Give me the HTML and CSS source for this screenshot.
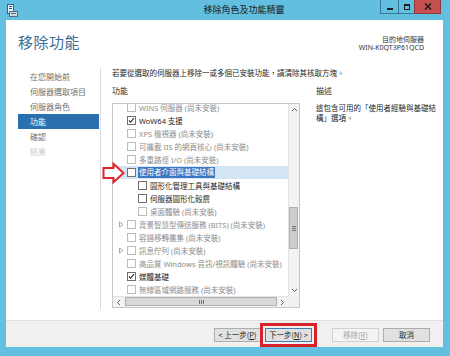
FILE: index.html
```html
<!DOCTYPE html>
<html lang="zh-Hant">
<head>
    <meta charset="UTF-8">
    <title>移除角色及功能精靈</title>
    <link rel="stylesheet" href="styles.css">
</head>
<body>
    <div class="window">
        <div class="titlebar">
            <svg class="app-icon" width="12" height="13" viewBox="0 0 12 13">
                <rect x="1.5" y="0.5" width="6" height="9" fill="#e8f4fb" stroke="#2d5f8a"/>
                <rect x="3" y="2" width="3" height="1" fill="#2d5f8a"/>
                <rect x="3" y="4" width="3" height="1" fill="#2d5f8a"/>
                <rect x="3.5" y="7.5" width="8" height="5" fill="#cfd8de" stroke="#55707f"/>
                <rect x="5" y="9" width="5" height="1" fill="#55707f"/>
            </svg>
            <div class="title">移除角色及功能精靈</div>
            <div class="caption-buttons">
                <span class="cb cb-min"><i></i></span>
                <span class="cb cb-max"><i></i></span>
                <span class="cb cb-close">
                    <svg width="8" height="7" viewBox="0 0 8 7"><path d="M1 0.5 L7 6.5 M7 0.5 L1 6.5" stroke="#1d1d1d" stroke-width="1.6"/></svg>
                </span>
            </div>
        </div>

        <div class="client">
            <div class="header">
                <h1>移除功能</h1>
                <div class="server">
                    <div>目的地伺服器</div>
                    <div>WIN-K0QT3P61QCD</div>
                </div>
            </div>

            <div class="main">
                <ul class="nav">
                    <li>在您開始前</li>
                    <li>伺服器選取項目</li>
                    <li>伺服器角色</li>
                    <li class="active">功能</li>
                    <li>確認</li>
                    <li class="disabled">結果</li>
                </ul>

                <div class="content">
                    <p class="intro">若要從選取的伺服器上移除一或多個已安裝功能，請清除其核取方塊。</p>
                    <div class="columns">
                        <div class="features">
                            <div class="label">功能</div>
                            <div class="listbox">
                                <div class="rows">
                                    <div class="row off first"><span class="exp"></span><span class="box"></span><span class="txt">WINS 伺服器 (尚未安裝)</span></div>
                                    <div class="row"><span class="exp"></span><span class="box checked"><svg viewBox="0 0 9 9"><path d="M1.3 4.3 L3.4 6.8 L7.6 1.4" fill="none" stroke="#1d1d1d" stroke-width="1.3"/></svg></span><span class="txt">WoW64 支援</span></div>
                                    <div class="row off"><span class="exp"></span><span class="box"></span><span class="txt">XPS 檢視器 (尚未安裝)</span></div>
                                    <div class="row off"><span class="exp"></span><span class="box"></span><span class="txt">可攜載 IIS 的網頁核心 (尚未安裝)</span></div>
                                    <div class="row off"><span class="exp"></span><span class="box"></span><span class="txt">多重路徑 I/O (尚未安裝)</span></div>
                                    <div class="row selected"><span class="exp"></span><span class="box"></span><span class="txt">使用者介面與基礎結構</span></div>
                                    <div class="row child"><span class="exp"></span><span class="box"></span><span class="txt">圖形化管理工具與基礎結構</span></div>
                                    <div class="row child"><span class="exp"></span><span class="box"></span><span class="txt">伺服器圖形化殼層</span></div>
                                    <div class="row child off"><span class="exp"></span><span class="box"></span><span class="txt">桌面體驗 (尚未安裝)</span></div>
                                    <div class="row off"><span class="exp"><svg viewBox="0 0 10 13"><path d="M3.5 4 L7 6.5 L3.5 9 Z" fill="none" stroke="#a6a6a6"/></svg></span><span class="box"></span><span class="txt">背景智慧型傳送服務 (BITS) (尚未安裝)</span></div>
                                    <div class="row off"><span class="exp"></span><span class="box"></span><span class="txt">容錯移轉叢集 (尚未安裝)</span></div>
                                    <div class="row off"><span class="exp"><svg viewBox="0 0 10 13"><path d="M3.5 4 L7 6.5 L3.5 9 Z" fill="none" stroke="#a6a6a6"/></svg></span><span class="box"></span><span class="txt">訊息佇列 (尚未安裝)</span></div>
                                    <div class="row off"><span class="exp"></span><span class="box"></span><span class="txt">高品質 Windows 音訊/視訊體驗 (尚未安裝)</span></div>
                                    <div class="row"><span class="exp"></span><span class="box checked"><svg viewBox="0 0 9 9"><path d="M1.3 4.3 L3.4 6.8 L7.6 1.4" fill="none" stroke="#1d1d1d" stroke-width="1.3"/></svg></span><span class="txt">媒體基礎</span></div>
                                    <div class="row off"><span class="exp"></span><span class="box"></span><span class="txt">無線區域網路服務 (尚未安裝)</span></div>
                                </div>
                                <div class="vscroll">
                                    <span class="sb-btn"><svg width="7" height="5" viewBox="0 0 7 5"><path d="M1 4 L3.5 1.5 L6 4" fill="none" stroke="#606060"/></svg></span>
                                    <div class="sb-track"><div class="sb-thumb v"><i></i><i></i><i></i></div></div>
                                    <span class="sb-btn"><svg width="7" height="5" viewBox="0 0 7 5"><path d="M1 1 L3.5 3.5 L6 1" fill="none" stroke="#606060"/></svg></span>
                                </div>
                                <div class="hscroll">
                                    <span class="sb-btn"><svg width="5" height="7" viewBox="0 0 5 7"><path d="M4 1 L1.5 3.5 L4 6" fill="none" stroke="#606060"/></svg></span>
                                    <div class="sb-track"><div class="sb-thumb h"><i></i><i></i><i></i></div></div>
                                    <span class="sb-btn"><svg width="5" height="7" viewBox="0 0 5 7"><path d="M1 1 L3.5 3.5 L1 6" fill="none" stroke="#606060"/></svg></span>
                                </div>
                                <div class="corner"></div>
                            </div>
                        </div>
                        <div class="desc">
                            <div class="label">描述</div>
                            <p>這包含可用的「使用者經驗與基礎結<br>構」選項。</p>
                        </div>
                    </div>
                </div>
            </div>

            <div class="footer">
                <button class="btn">&lt; 上一步(<u>P</u>)</button>
                <button class="btn default marked">下一步(<u>N</u>) &gt;</button>
                <button class="btn off gap">移除(<u>R</u>)</button>
                <button class="btn">取消</button>
            </div>
        </div>

        <!-- callout pointing at the selected feature -->
        <svg class="callout-arrow" width="24" height="22" viewBox="0 0 24 22">
            <path d="M1.5 6 H11.5 V1.8 L21.5 11 L11.5 20.2 V16 H1.5 Z" fill="#fff" stroke="#e2242b" stroke-width="2" stroke-linejoin="miter"/>
        </svg>
    </div>
</body>
</html>
```

FILE: styles.css
```css
body {
    margin: 0;
    font-family: "Noto Sans", "Noto Sans CJK TC", sans-serif;
    color: #262626;
}

.window {
    position: relative;
    width: 450px;
    height: 356px;
    box-sizing: border-box;
    padding: 0 7px 9px 6px;
    background-color: #63bfdf;
    display: flex;
    flex-direction: column;
}

/* title bar */
.titlebar {
    height: 20px;
    display: flex;
    align-items: flex-start;
}

.app-icon {
    margin-top: 4px;
    flex: none;
}

.title {
    flex: 1;
    padding-left: 90px;
    text-align: center;
    font-size: 9px;
    line-height: 20px;
    color: #1a1a1a;
    font-family: "Noto Sans CJK TC", sans-serif;
}

.caption-buttons {
    display: flex;
    margin-right: 2px;
}

.cb {
    height: 14px;
    box-sizing: border-box;
    border: 1px solid #357a95;
    border-top: none;
    display: flex;
    align-items: center;
    justify-content: center;
}

.cb + .cb {
    margin-left: -1px;
}

.cb-min {
    width: 19px;
}

.cb-min i {
    width: 6px;
    height: 2px;
    margin-top: 5px;
    background: #1d1d1d;
}

.cb-max {
    width: 17px;
}

.cb-max i {
    width: 4px;
    height: 3px;
    border: 1px solid #1d1d1d;
    border-top-width: 2px;
}

.cb-close {
    width: 27px;
    background-color: #c75050;
    border-color: #8e3a3a;
}

/* client area */
.client {
    flex: 1;
    background: #fff;
    display: flex;
    flex-direction: column;
}

.header {
    height: 48px;
    display: flex;
    justify-content: space-between;
    padding: 0 19px 0 12px;
}

.header h1 {
    margin: 12px 0 0;
    font-size: 15px;
    line-height: 20px;
    font-weight: normal;
    letter-spacing: 0.5px;
    color: #3b6c96;
    font-family: "Noto Sans CJK TC", sans-serif;
}

.server {
    margin-top: 16px;
    text-align: right;
    font-size: 7px;
    line-height: 8px;
    color: #333;
}

.main {
    flex: 1;
    display: flex;
}

.nav {
    list-style: none;
    margin: 0;
    padding: 1px 1px 0 12px;
    width: 81px;
    height: 240px;
    border-right: 1px solid #dadada;
    font-size: 8px;
}

.nav li {
    height: 15px;
    line-height: 15px;
    padding-left: 12px;
    color: #707070;
    font-family: "Noto Sans CJK TC", sans-serif;
}

.nav li.active {
    background: #2a6fae;
    color: #fff;
}

.nav li.disabled {
    color: #c9c9c9;
}

.content {
    flex: 1;
    padding-left: 11px;
}

.intro {
    margin: 0;
    font-size: 7.5px;
    line-height: 10px;
    font-family: "Noto Sans CJK TC", sans-serif;
}

.columns {
    display: flex;
    gap: 16px;
    margin-top: 8px;
}

.label {
    font-size: 8px;
    line-height: 10px;
    font-family: "Noto Sans CJK TC", sans-serif;
}

.features {
    width: 188px;
}

.desc {
    flex: 1;
}

.desc p {
    margin: 7px 0 0;
    font-size: 7.5px;
    line-height: 10px;
    font-family: "Noto Sans CJK TC", sans-serif;
}

/* feature tree */
.listbox {
    margin-top: 7px;
    height: 205px;
    box-sizing: border-box;
    border: 1px solid #c6c6c6;
    display: grid;
    grid-template-columns: 1fr 11px;
    grid-template-rows: 1fr 11px;
}

.rows {
    overflow: hidden;
    font-size: 7.5px;
}

.row {
    height: 13px;
    display: flex;
    align-items: center;
    padding-left: 3px;
    white-space: nowrap;
}

.row.first {
    margin-top: -3px;
}

.row.child {
    padding-left: 14px;
}

.exp {
    width: 10px;
    height: 13px;
}

.exp svg {
    width: 10px;
    height: 13px;
    display: block;
}

.box {
    width: 9px;
    height: 9px;
    box-sizing: border-box;
    border: 1px solid #707070;
    margin-left: 1px;
    margin-right: 3px;
    background: #fff;
    flex: none;
}

.box svg {
    display: block;
    width: 7px;
    height: 7px;
}

.row.off .txt {
    color: #8c8c8c;
}

.row.off .box {
    border-color: #bcbcbc;
}

.row.selected {
    background: #d3e4f4;
}

.row.selected .txt {
    background: #3a76c2;
    color: #fff;
    padding: 0 1px;
    margin-left: -1px;
    line-height: 11px;
}

/* scrollbars */
.vscroll,
.hscroll {
    display: flex;
    background: #f3f3f3;
}

.vscroll {
    flex-direction: column;
    border-left: 1px solid #e3e3e3;
}

.hscroll {
    border-top: 1px solid #e3e3e3;
}

.sb-btn {
    width: 11px;
    height: 11px;
    flex: none;
    display: flex;
    align-items: center;
    justify-content: center;
}

.sb-track {
    flex: 1;
    display: flex;
}

.vscroll .sb-track {
    flex-direction: column;
}

.sb-thumb {
    background: #cdcdcd;
    border: 1px solid #b0b0b0;
    box-sizing: border-box;
    display: flex;
    align-items: center;
    justify-content: center;
    gap: 1px;
}

.sb-thumb.v {
    margin: 92px 1px 0 0;
    height: 42px;
    flex-direction: column;
}

.sb-thumb.v i {
    width: 4px;
    height: 1px;
    background: #707070;
}

.sb-thumb.h {
    flex: 1;
    margin: 0 0 1px 1px;
    background: #d8d8d8;
}

.sb-thumb.h i {
    width: 1px;
    height: 4px;
    background: #707070;
}

.corner {
    background: #f0f0f0;
}

/* footer */
.footer {
    height: 27px;
    box-sizing: border-box;
    border-top: 1px solid #dfdfdf;
    background: #f0f0f0;
    display: flex;
    justify-content: flex-end;
    align-items: flex-start;
    gap: 4px;
    padding: 7px 13px 0 0;
}

.btn {
    width: 47px;
    height: 14px;
    padding: 0;
    box-sizing: border-box;
    border: 1px solid #adadad;
    background: #e1e1e1;
    font-family: "Noto Sans CJK TC", sans-serif;
    font-size: 7.5px;
    line-height: 12px;
    color: #1d1d1d;
}

.btn u {
    text-decoration: underline;
}

.btn.default {
    border-color: #3c7fb1;
}

.btn.marked {
    outline: 3px solid #d8222a;
    outline-offset: 2px;
}

.btn.off {
    color: #a3a3a3;
    background: #f4f4f4;
    border-color: #d0d0d0;
}

.btn.gap {
    margin-left: 16px;
}

.callout-arrow {
    position: absolute;
    left: 102px;
    top: 162px;
}
```
